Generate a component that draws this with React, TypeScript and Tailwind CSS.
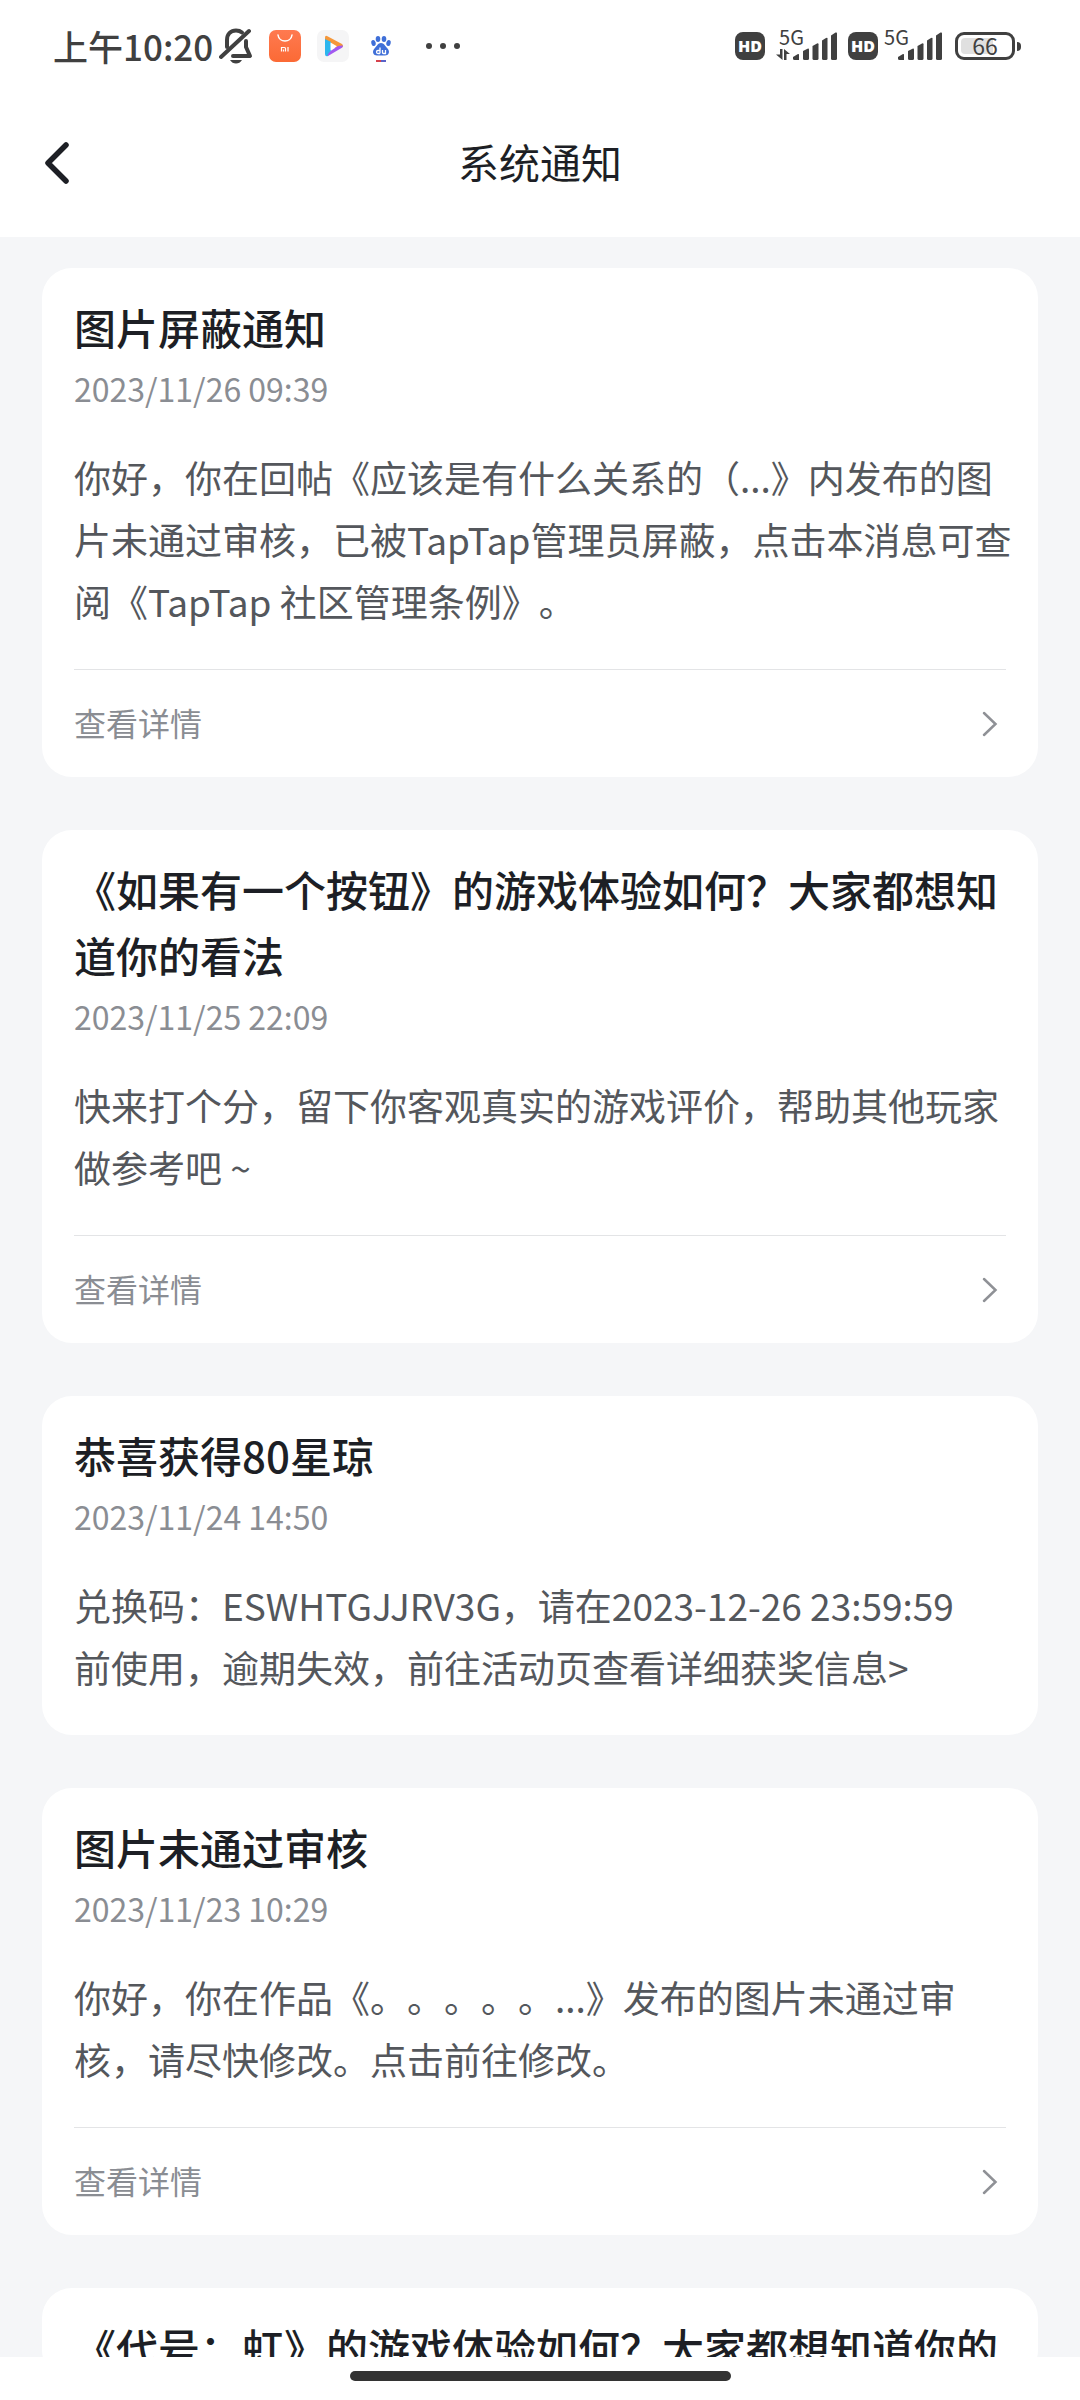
import React from 'react';

interface Notice {
  id: number;
  title: string;
  time: string;
  content: string;
  hasDetail: boolean;
}

const notices: Notice[] = [
  {
    id: 1,
    title: '图片屏蔽通知',
    time: '2023/11/26 09:39',
    content:
      '你好，你在回帖《应该是有什么关系的（...》内发布的图片未通过审核，已被TapTap管理员屏蔽，点击本消息可查阅《TapTap 社区管理条例》。',
    hasDetail: true
  },
  {
    id: 2,
    title: '《如果有一个按钮》的游戏体验如何？大家都想知道你的看法',
    time: '2023/11/25 22:09',
    content: '快来打个分，留下你客观真实的游戏评价，帮助其他玩家做参考吧 ~',
    hasDetail: true
  },
  {
    id: 3,
    title: '恭喜获得80星琼',
    time: '2023/11/24 14:50',
    content: '兑换码：ESWHTGJJRV3G，请在2023-12-26 23:59:59\n前使用，逾期失效，前往活动页查看详细获奖信息>',
    hasDetail: false
  },
  {
    id: 4,
    title: '图片未通过审核',
    time: '2023/11/23 10:29',
    content: '你好，你在作品《。。。。。...》发布的图片未通过审核，请尽快修改。点击前往修改。',
    hasDetail: true
  },
  {
    id: 5,
    title: '《代号：虹》的游戏体验如何？大家都想知道你的',
    time: '',
    content: '',
    hasDetail: false
  }
];

const MutedBell = () => (
  <svg width="34" height="36" viewBox="0 0 34 36" fill="none" stroke="#404040" strokeWidth="4" strokeLinecap="round">
    <path d="M8 19V12C8 6 12 2.500 17 2.500C19.500 2.500 21.500 3.200 23 4.500" />
    <path d="M27 13V19L31 28H14" strokeLinejoin="round" />
    <path d="M2 29L30 3" />
    <path d="M11 32H23C21.500 34.500 19.500 35.500 17 35.500S12.500 34.500 11 32Z" fill="#404040" stroke="none" />
  </svg>
);

const MiStoreIcon = () => (
  <svg width="32" height="32" viewBox="0 0 32 32" fill="none">
    <defs>
      <linearGradient id="mi-bg" x1="0" y1="0" x2="0" y2="1">
        <stop offset="0" stopColor="#ff7a50" />
        <stop offset="1" stopColor="#fb6a35" />
      </linearGradient>
    </defs>
    <rect width="32" height="32" rx="7" fill="url(#mi-bg)" />
    <path d="M9 5C10 13 22 13 23 5" stroke="#fff" strokeWidth="1.500" strokeLinecap="round" />
    <path d="M12.500 21.500V17.500H15.500Q16.500 17.500 16.500 18.500V21.500M14.500 19.500V21.500M19 17V21.500" stroke="#fff" strokeWidth="1.200" />
  </svg>
);

const VideoIcon = () => (
  <svg width="32" height="32" viewBox="0 0 32 32" fill="none">
    <rect width="32" height="32" rx="7" fill="#f5f5f6" />
    <path d="M8 7.500Q8 5 10.500 6.200L25 14Q27 16 25 17.500L20 19L8 11Z" fill="#f5973a" />
    <path d="M8 9L14 12V21L11 26Q8 27 8 24Z" fill="#2cb6ee" />
    <path d="M26 15.500Q26 17 24.500 18L11 26Q9.500 25.500 13.500 21L21 16Z" fill="#a259f0" />
    <path d="M13.500 12.500V20.500L20 16.200Z" fill="#fff" />
  </svg>
);

const BaiduIcon = () => (
  <svg width="32" height="32" viewBox="0 0 32 32">
    <g fill="#3f6fd8">
      <ellipse cx="8.500" cy="13" rx="2.200" ry="3" transform="rotate(-12 8.500 13)" />
      <ellipse cx="13" cy="9" rx="2.300" ry="3" />
      <ellipse cx="19" cy="9" rx="2.300" ry="3" />
      <ellipse cx="23.500" cy="13" rx="2.200" ry="3" transform="rotate(12 23.500 13)" />
      <path d="M16 13C19 13 20 16 22.500 18.500C25.500 22 23.500 25.500 20 25.500H12C8.500 25.500 6.500 22 9.500 18.500C12 16 13 13 16 13Z" />
    </g>
    <path d="M15 17.500V23.500M15 20.500H13Q11.500 20.500 11.500 22T13 23.500H15M17.500 20V22.500Q17.500 23.500 18.500 23.500H20.500V20" fill="none" stroke="#fff" strokeWidth="1.300" />
    <path d="M11 31H16" stroke="#d6424c" strokeWidth="2" />
    <path d="M16 31H21" stroke="#5a62c8" strokeWidth="2" />
  </svg>
);

const SignalBars = () => (
  <svg width="44" height="28" viewBox="0 0 44 28" fill="#404040">
    <path d="M0 25L5 22Q6 21.500 6 23V28H1.500Q0 28 0 26.500Z" />
    <path d="M10 19L14.500 16.800Q16 16.200 16 17.500V26.500Q16 28 14.500 28H11.500Q10 28 10 26.500Z" />
    <path d="M19.500 14L24 11.500Q25.500 11 25.500 12.200V26.500Q25.500 28 24 28H21Q19.500 28 19.500 26.500Z" />
    <path d="M29 8.500L33 6Q34.500 5.200 34.500 6.500V26.500Q34.500 28 33 28H30.500Q29 28 29 26.500Z" />
    <path d="M38 3.500L42.500.6Q44 0 44 1.200V26.500Q44 28 42.500 28H39.500Q38 28 38 26.500Z" />
  </svg>
);

const DataArrows = () => (
  <svg width="14" height="11" viewBox="0 0 14 11" fill="#404040">
    <path d="M4 0H6.500V11L0 5.500H4Z" />
    <path d="M8 0L14 5H10.500V11H8Z" />
  </svg>
);

const HdBadge = () => (
  <span className="flex h-7 w-[30px] items-center justify-center rounded-lg bg-[#404040] font-['Open_Sans',sans-serif] text-[16px] font-extrabold text-white">
    HD
  </span>
);

const StatusBar = () => (
  <div className="flex h-[92px] items-center justify-between pr-[59px] pl-[53px] text-[#404040]">
    <div className="flex items-center">
      <span className="pb-[2px] text-[35px] leading-none font-medium">上午10:20</span>
      <div className="ml-[6px] flex items-center gap-4">
        <MutedBell />
        <MiStoreIcon />
        <VideoIcon />
        <BaiduIcon />
      </div>
      <div className="ml-[29px] flex gap-2">
        <span className="size-[6px] rounded-full bg-[#404040]" />
        <span className="size-[6px] rounded-full bg-[#404040]" />
        <span className="size-[6px] rounded-full bg-[#404040]" />
      </div>
    </div>

    <div className="flex items-center">
      <HdBadge />
      <div className="relative ml-7 flex items-end">
        <SignalBars />
        <span className="absolute right-[33px] -top-[5px] text-[20px] leading-[20px]">5G</span>
        <span className="absolute right-[47px] bottom-0">
          <DataArrows />
        </span>
      </div>
      <div className="ml-[11px]">
        <HdBadge />
      </div>
      <div className="relative ml-5 flex items-end">
        <SignalBars />
        <span className="absolute right-[33px] -top-[5px] text-[20px] leading-[20px]">5G</span>
      </div>
      <div className="ml-[13px] flex items-center gap-[2px]">
        <span className="relative flex h-7 w-[60px] items-center justify-center rounded-[9px] border-3 border-[#404040] text-[23px] leading-none">
          <span className="absolute inset-y-[3px] left-[3px] w-[32px] rounded-l-[4px] bg-[#e0e0e0]" />
          <span className="relative pb-[2px]">66</span>
        </span>
        <span className="h-[9px] w-1 rounded-r-sm bg-[#404040]" />
      </div>
    </div>
  </div>
);

const Header = () => (
  <header className="bg-white pb-[5px]">
    <StatusBar />
    <div className="grid h-[140px] grid-cols-[1fr_auto_1fr] items-center px-[42px]">
      <button aria-label="返回" className="justify-self-start">
        <svg width="30" height="44" viewBox="0 0 30 44" fill="none">
          <path d="M24 5L6 23L24 41" stroke="#1d1f25" strokeWidth="5.500" strokeLinecap="round" strokeLinejoin="round" />
        </svg>
      </button>
      <h1 className="pb-[2px] text-[41px] leading-[60px] text-[#1d1f25]">系统通知</h1>
    </div>
  </header>
);

const NoticeCard: React.FC<{ notice: Notice }> = ({ notice }) => (
  <article className="rounded-[30px] bg-white px-8 pt-[26px]">
    <h2 className="text-[42px] leading-[66px] font-medium text-[#1d1f25]">{notice.title}</h2>
    {notice.time && <time className="mt-2 block text-[32px] leading-[40px] text-[#8a8d93]">{notice.time}</time>}
    {notice.content && (
      <p className="mt-[38px] -mr-2 pb-[37px] text-[37px] leading-[62px] whitespace-pre-line text-[#54575c]">
        {notice.content}
      </p>
    )}
    {notice.hasDetail && (
      <button className="flex h-[108px] w-full items-center justify-between border-t border-[#e3e4e6] pr-2 text-[32px] text-[#8a8d93]">
        <span className="pb-[3px]">查看详情</span>
        <svg width="16" height="26" viewBox="0 0 16 26" fill="none">
          <path d="M2 2L13.500 13L2 24" stroke="#8f9196" strokeWidth="2.500" strokeLinecap="round" />
        </svg>
      </button>
    )}
  </article>
);

const App = () => {
  return (
    <div
      lang="zh-CN"
      className="flex h-screen flex-col bg-[#f5f6f8] font-['Noto_Sans_CJK_SC',sans-serif] [text-spacing-trim:space-all]"
    >
      <Header />
      <main className="min-h-0 flex-1 overflow-hidden px-[42px] pt-[31px]">
        <div className="flex flex-col gap-[53px]">
          {notices.map(notice => (
            <NoticeCard key={notice.id} notice={notice} />
          ))}
        </div>
      </main>
      <footer className="flex h-[43px] shrink-0 items-start justify-center bg-white pt-[14px]">
        <div className="h-[10px] w-[381px] rounded-full bg-[#333333]" />
      </footer>
    </div>
  );
};

export default App;
